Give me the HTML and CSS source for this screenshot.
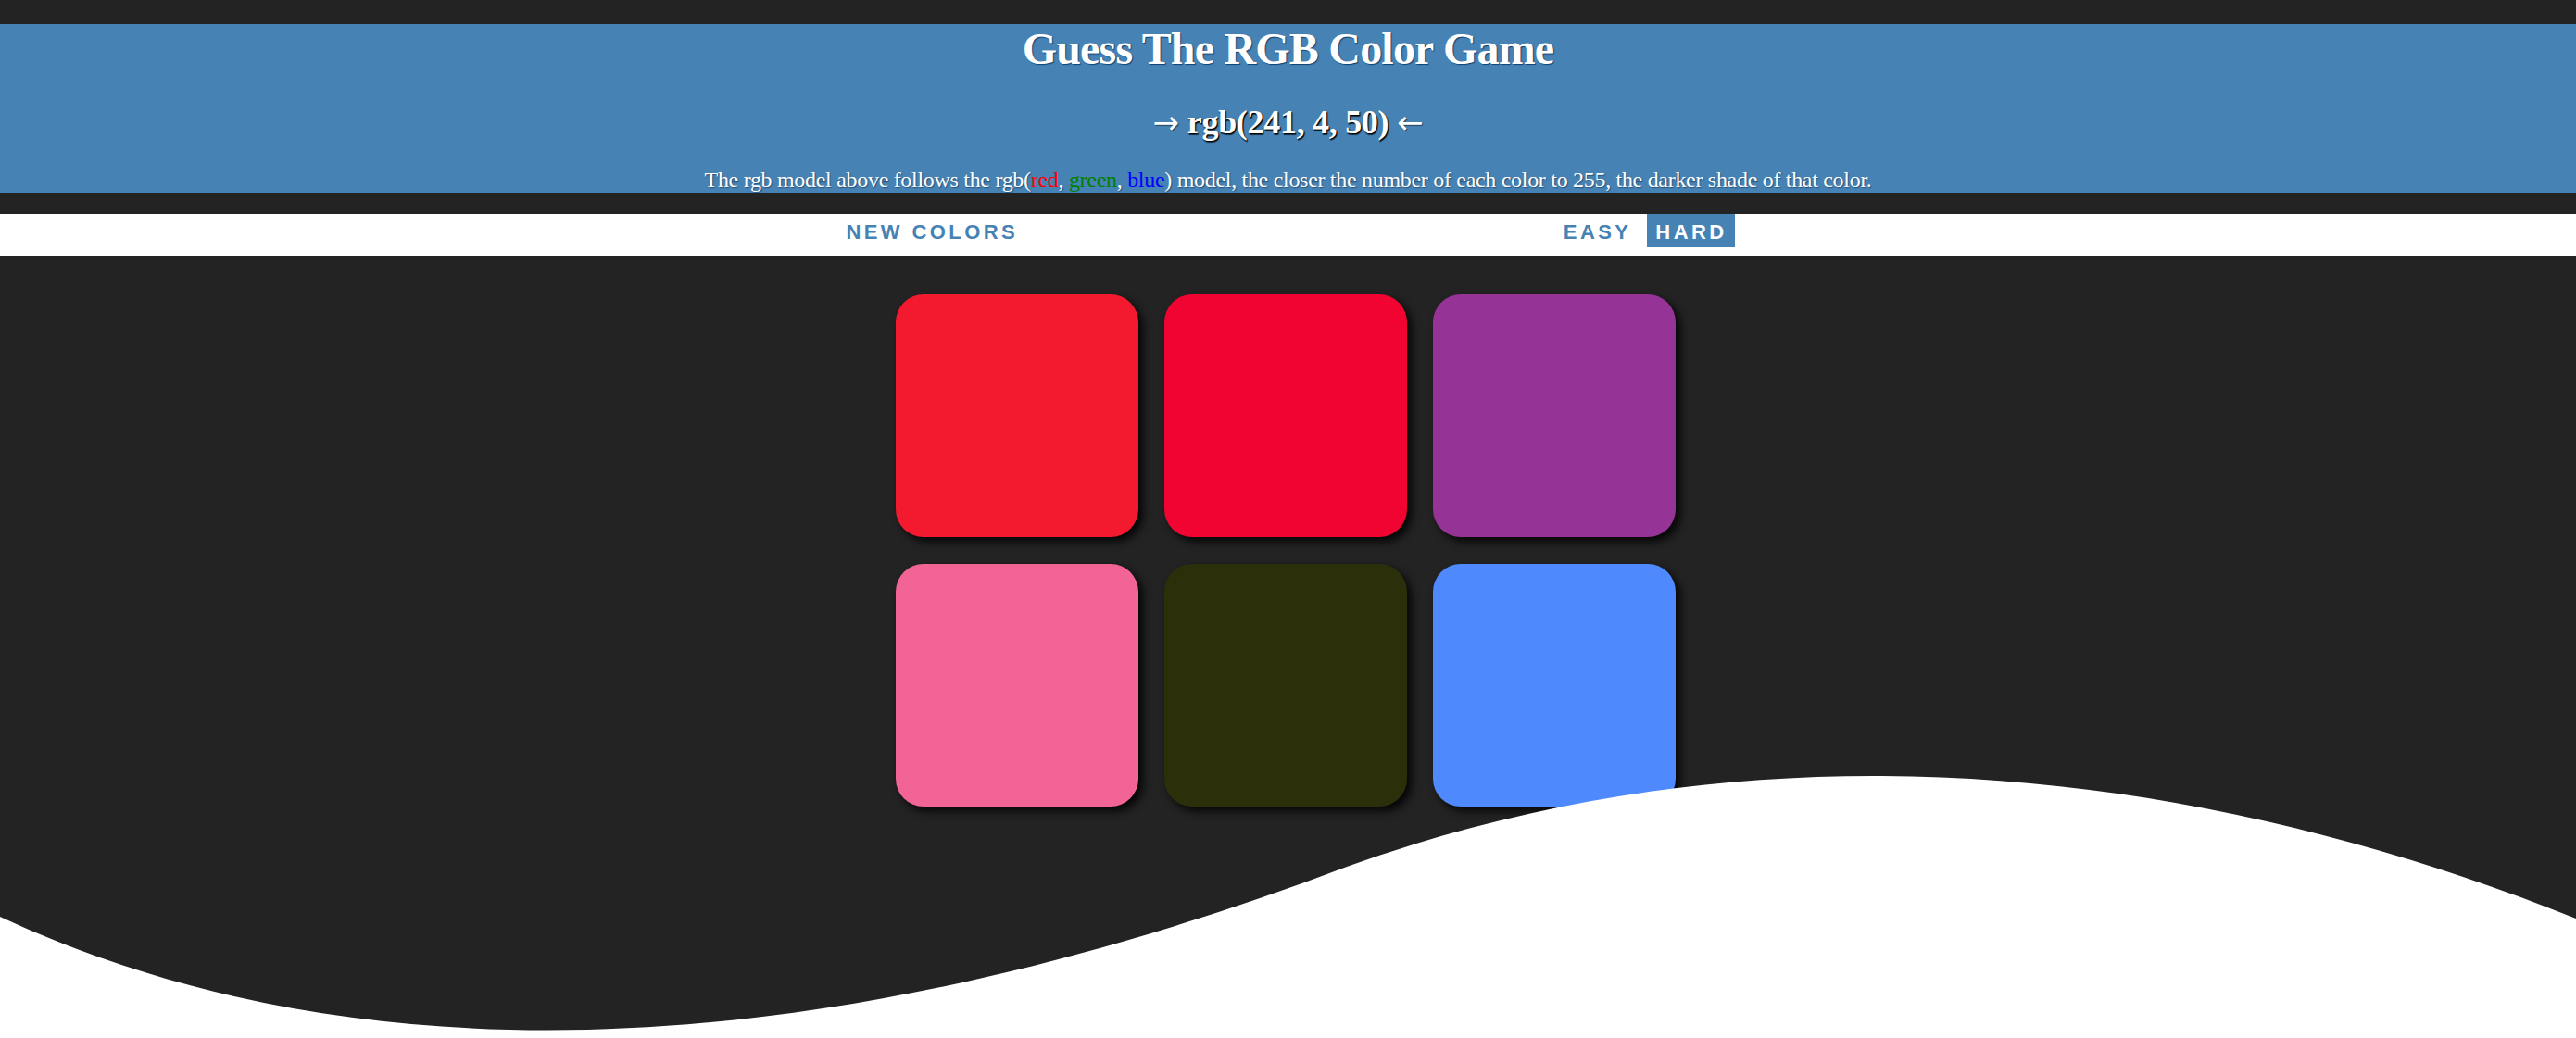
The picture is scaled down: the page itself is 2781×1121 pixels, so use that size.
FILE: index.html
```html
<!DOCTYPE html>
<html lang="en">
<head>
<meta charset="utf-8">
<title>Guess The RGB Color Game</title>
<link rel="stylesheet" href="styles.css">
</head>
<body>
<div class="page">
  <header class="header">
    <h1 class="title">Guess The RGB Color Game</h1>
    <h2 class="target"><span class="arrow">→</span> rgb(241, 4, 50) <span class="arrow">←</span></h2>
    <p class="hint">The rgb model above follows the rgb(<span class="c-red">red</span>, <span class="c-green">green</span>, <span class="c-blue">blue</span>) model, the closer the number of each color to 255, the darker shade of that color.</p>
  </header>
  <nav class="stripe">
    <div class="stripe-inner">
      <button class="btn">New Colors</button>
      <div class="modes">
        <button class="btn">Easy</button>
        <button class="btn selected">Hard</button>
      </div>
    </div>
  </nav>
  <main class="board">
    <div class="grid">
      <div class="square" style="background: rgb(243, 26, 48);"></div>
      <div class="square" style="background: rgb(241, 4, 50);"></div>
      <div class="square" style="background: rgb(150, 51, 150);"></div>
      <div class="square" style="background: rgb(242, 100, 149);"></div>
      <div class="square" style="background: rgb(43, 48, 11);"></div>
      <div class="square" style="background: rgb(78, 138, 254);"></div>
    </div>
  </main>
  <svg class="wave" viewBox="0 0 2781 400" preserveAspectRatio="none" aria-hidden="true">
    <path d="M0,269 C400,455 904,423 1454,215 C1874,64 2331,91 2781,271 L2781,400 L0,400 Z" fill="#ffffff"/>
  </svg>
</div>
</body>
</html>
```
FILE: styles.css
```css
html, body {
  margin: 0;
  padding: 0;
  background: #232323;
}

body {
  font-family: "Liberation Serif", "Times New Roman", serif;
}

.page {
  position: relative;
  min-height: 1121px;
  height: 100vh;
  overflow: hidden;
  padding-top: 26px;
  box-sizing: border-box;
}

.header {
  background: #4682b4;
  text-align: center;
  color: #ffffff;
}

.title {
  margin: 0;
  font-size: 48px;
  line-height: 54px;
  font-weight: bold;
  letter-spacing: -0.8px;
  text-shadow: 1px 1px 1px #12426e;
}

.target {
  margin: 31px 0 0;
  font-size: 36px;
  line-height: 42px;
  font-weight: bold;
  letter-spacing: -0.3px;
  text-shadow: 1px 1px 1px #000000, 1px 2px 1px rgba(0, 0, 0, 0.6);
}

.arrow {
  font-weight: normal;
  font-family: "DejaVu Sans", "Liberation Serif", sans-serif;
  font-size: 34px;
  letter-spacing: 0;
  text-shadow: 1px 1px 1px rgba(0, 0, 0, 0.5);
}

.hint {
  margin: 28px 0 0;
  font-size: 24px;
  line-height: 27px;
  letter-spacing: -0.3px;
  text-shadow: 1px 1px 1px rgba(20, 50, 80, 0.6);
}

.c-red { color: #ff0000; text-shadow: none; }
.c-green { color: #008000; text-shadow: none; }
.c-blue { color: #0000ff; text-shadow: none; }

.stripe {
  margin-top: 23px;
  height: 45px;
  background: #ffffff;
}

.stripe-inner {
  width: 972px;
  height: 100%;
  margin: 0 auto;
  display: flex;
  justify-content: space-between;
  align-items: flex-start;
  padding-right: 4px;
  box-sizing: border-box;
}

.modes {
  display: flex;
  gap: 12px;
}

.btn {
  border: none;
  background: none;
  margin: 0;
  padding: 7px 5px 3px 9px;
  font-family: "Liberation Sans", Arial, sans-serif;
  font-size: 22px;
  line-height: 26px;
  font-weight: bold;
  letter-spacing: 3.4px;
  text-transform: uppercase;
  color: #4682b4;
  cursor: pointer;
}

.btn.selected {
  background: #4682b4;
  color: #ffffff;
  padding-right: 8px;
}

.board {
  margin-top: 42px;
  display: flex;
  justify-content: center;
  padding-right: 6px;
}

.grid {
  display: grid;
  grid-template-columns: repeat(3, 262px);
  grid-auto-rows: 262px;
  column-gap: 28px;
  row-gap: 29px;
}

.square {
  border-radius: 30px;
  box-shadow: 5px 5px 10px rgba(0, 0, 0, 0.85);
}

.wave {
  position: absolute;
  left: 0;
  bottom: 0;
  width: 100%;
  height: 400px;
  display: block;
}
```
